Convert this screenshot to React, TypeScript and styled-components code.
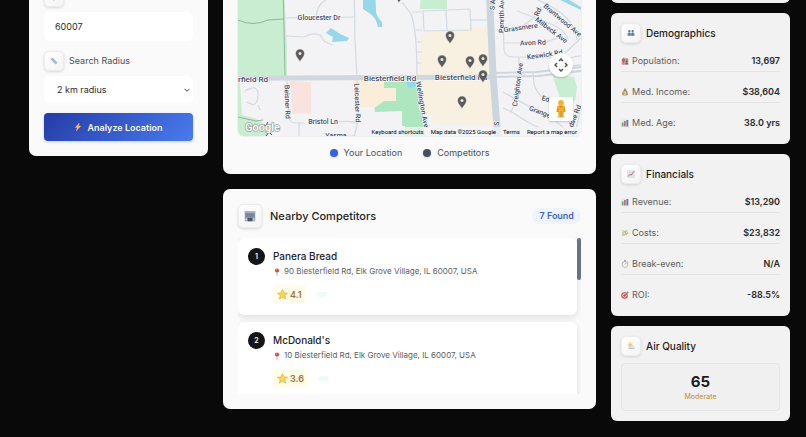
import React from "react";
import styled, { createGlobalStyle, css } from "styled-components";

const GlobalStyle = createGlobalStyle`
  *, *::before, *::after { box-sizing: border-box; }
  html, body { margin: 0; background: #090909; overflow: hidden; }
  body, button, input, select { font-family: Inter, "Liberation Sans", sans-serif; }
  h2, h3, p, dl, dd, dt, ol { margin: 0; padding: 0; }
`;

/* ---------- layout ---------- */

const Page = styled.main`
  display: grid;
  grid-template-columns: minmax(0, 179fr) minmax(0, 373fr) minmax(0, 179fr);
  gap: 15px;
  align-items: start;
  margin-top: -28px;
  padding: 0 16px 16px 29px;
  color: #1d1d1f;
`;

const Column = styled.div<{ $gap: number }>`
  display: flex;
  flex-direction: column;
  gap: ${(p) => p.$gap}px;
`;

const Card = styled.section`
  background: #fafafa;
  border-radius: 7px;
  padding: 15px;
`;

const StatCard = styled.section`
  background: #f2f2f2;
  border-radius: 6px;
  padding: 10px;
`;

const IconTile = styled.span<{ $size: number }>`
  display: inline-flex;
  align-items: center;
  justify-content: center;
  flex: none;
  width: ${(p) => p.$size}px;
  height: ${(p) => p.$size}px;
  border-radius: 5px;
  background: linear-gradient(145deg, #ffffff, #f4f4f5);
  border: 1px solid #ececee;
  box-shadow: 0 1px 3px rgba(0, 0, 0, 0.14);
`;

/* ---------- search form ---------- */

const Form = styled.form`
  display: flex;
  flex-direction: column;
  gap: 10px;
`;

const Field = styled.div`
  display: flex;
  flex-direction: column;
  gap: 5px;
`;

const FieldLabel = styled.label`
  display: flex;
  align-items: center;
  gap: 5px;
  font-size: 9px;
  line-height: 20px;
  color: #505054;
`;

const control = css`
  width: 100%;
  border: 0;
  border-radius: 5px;
  background: #ffffff;
  color: #2c2c2e;
  font-size: 9px;
`;

const TextInput = styled.input`
  ${control}
  height: 29px;
  padding: 0 11px;
`;

const SelectWrap = styled.div`
  display: grid;
  align-items: center;
  & > * { grid-area: 1 / 1; }
  & > svg { justify-self: end; margin-right: 2px; pointer-events: none; }
`;

const Select = styled.select`
  ${control}
  appearance: none;
  height: 27px;
  padding: 0 13px;
`;

const PrimaryButton = styled.button`
  display: flex;
  align-items: center;
  justify-content: center;
  gap: 5px;
  height: 28px;
  border: 0;
  border-radius: 4px;
  background: linear-gradient(135deg, #243ca6, #4a7bee);
  box-shadow: 0 1px 3px rgba(37, 99, 235, 0.3);
  color: #f4f7ff;
  font-size: 9px;
  font-weight: 600;
`;

/* ---------- map ---------- */

const MapFrame = styled.div`
  position: relative;
  height: 149px;
  border-radius: 6px;
  overflow: hidden;
  box-shadow: 0 0 0 1px #eeeff0;
`;

const MapSvg = styled.svg`
  display: block;
  width: 100%;
  height: 100%;
`;

const MapCredits = styled.div`
  position: absolute;
  right: 0;
  bottom: 0;
  display: flex;
  background: rgba(245, 245, 245, 0.7);
  padding: 0 4px;
  gap: 7px;
  line-height: 9px;
`;

const creditText = css`
  font-family: Roboto, "Liberation Sans", sans-serif;
  font-size: 6px;
  line-height: 9px;
  color: #000000;
  white-space: nowrap;
`;

const CreditButton = styled.button`
  ${creditText}
  border: 0;
  padding: 0;
  background: none;
`;

const CreditNote = styled.span`
  ${creditText}
`;

const CreditLink = styled.a`
  ${creditText}
  text-decoration: none;
`;

const MapControls = styled.div`
  position: absolute;
  right: 8px;
  bottom: 15px;
  display: flex;
  flex-direction: column;
  gap: 20px;
`;

const MapControl = styled.button<{ $round?: boolean }>`
  display: flex;
  align-items: center;
  justify-content: center;
  width: 24px;
  height: 24px;
  padding: 0;
  border: 0;
  border-radius: ${(p) => (p.$round ? "50%" : "1px")};
  background: #ffffff;
  box-shadow: 0 1px 2px rgba(0, 0, 0, 0.2);
`;

const Legend = styled.div`
  display: flex;
  justify-content: center;
  gap: 21px;
  padding-top: 10px;
`;

const LegendItem = styled.span`
  display: flex;
  align-items: center;
  gap: 6px;
  font-size: 9px;
  line-height: 13px;
  color: #475063;
`;

const Dot = styled.i<{ $color: string }>`
  width: 8px;
  height: 8px;
  border-radius: 50%;
  background: ${(p) => p.$color};
  box-shadow: 0 1px 2px rgba(0, 0, 0, 0.15);
`;

/* ---------- competitors ---------- */

const ListHeader = styled.header`
  display: flex;
  align-items: center;
  gap: 8px;
  margin-bottom: 10px;
`;

const ListTitle = styled.h2`
  flex: 1;
  font-size: 11px;
  line-height: 24px;
  font-weight: 500;
`;

const CountPill = styled.span`
  padding: 0 7px;
  border-radius: 8px;
  background: #eef4fe;
  color: #4463cf;
  font-size: 9px;
  line-height: 16px;
  font-weight: 600;
`;

const ScrollArea = styled.div`
  display: flex;
  height: 156px;
  overflow: hidden;
`;

const CompetitorList = styled.ol`
  flex: 1;
  display: flex;
  flex-direction: column;
  gap: 7px;
  list-style: none;
`;

const ScrollThumb = styled.div`
  width: 4px;
  height: 42px;
  border-radius: 2px;
  background: #64748b;
`;

const CompetitorItem = styled.li`
  display: flex;
  align-items: flex-start;
  flex: none;
  gap: 8px;
  height: 77px;
  padding: 10px;
  border-radius: 6px;
  background: #ffffff;
  box-shadow: 0 2px 6px rgba(0, 0, 0, 0.12);
`;

const Rank = styled.span`
  flex: none;
  width: 17px;
  height: 17px;
  border-radius: 50%;
  background: #151517;
  color: #ffffff;
  font-size: 7px;
  line-height: 17px;
  font-weight: 600;
  text-align: center;
`;

const CompetitorName = styled.h3`
  font-size: 10px;
  line-height: 16px;
  font-weight: 500;
`;

const Address = styled.p`
  display: flex;
  align-items: center;
  gap: 3px;
  font-size: 8px;
  line-height: 15px;
  color: #5e5e62;
`;

const Badges = styled.div`
  display: flex;
  align-items: center;
  gap: 10px;
  margin-top: 6px;
`;

const Rating = styled.span`
  display: flex;
  align-items: center;
  gap: 2px;
  padding: 0 4px;
  border-radius: 4px;
  background: #fffce9;
  color: #a0703c;
  font-size: 9px;
  line-height: 19px;
  font-weight: 600;
`;

const PriceHint = styled.i`
  width: 11px;
  height: 5px;
  border-radius: 3px;
  background: #f0fbf7;
`;

/* ---------- stats ---------- */

const StatHeader = styled.header`
  display: flex;
  align-items: center;
  gap: 5px;
  margin-bottom: 7px;
`;

const StatTitle = styled.h2`
  font-size: 10px;
  line-height: 20px;
  font-weight: 500;
`;

const StatList = styled.dl`
  display: flex;
  flex-direction: column;
  gap: 9px;
`;

const StatRow = styled.div`
  display: flex;
  justify-content: space-between;
  height: 22px;
  border-bottom: 1px solid #e3e3e4;
  font-size: 9px;
  line-height: 22px;
  &:last-child { border-bottom-color: transparent; }
`;

const StatName = styled.dt`
  display: flex;
  align-items: center;
  gap: 3px;
  color: #5c5c60;
`;

const StatValue = styled.dd`
  color: #2a2a2c;
  font-weight: 600;
`;

const AirBox = styled.div`
  display: flex;
  flex-direction: column;
  align-items: center;
  padding: 8px;
  border: 1px solid #e5e5e6;
  border-radius: 4px;
  background: #f0f0f0;
`;

const AirValue = styled.strong`
  font-size: 15px;
  line-height: 19px;
  font-weight: 700;
`;

const AirLabel = styled.span`
  font-size: 7px;
  line-height: 11px;
  font-weight: 500;
  color: #c99b4c;
`;

/* ---------- pictograms, all on a 16-unit grid ---------- */

const glyphs: Record<string, React.ReactNode> = {
  pin: (
    <>
      <path d="M8 8v7.500" stroke="#9aa0a6" strokeWidth="1.600" />
      <circle cx="8" cy="5" r="4.200" fill="#d8494f" />
      <circle cx="6.800" cy="3.700" r="1.200" fill="#f3a3a3" />
    </>
  ),
  ruler: (
    <>
      <path d="M1 4.500 4.500 1 15 11.500 11.500 15z" fill="#a9bbd3" />
      <path d="m6 3-1.500 1.500M8 5 6.500 6.500M10 7 8.500 8.500M12 9l-1.500 1.500" stroke="#6f84a3" strokeWidth="0.800" />
    </>
  ),
  bolt: <path d="M10.500 0 2.500 9h4.200L4.500 16l9-9.800H9z" fill="#f7b267" stroke="#ffdf8a" strokeWidth="0.600" />,
  store: (
    <>
      <path d="M1 1.500h14V15H1z" fill="#8b98a6" />
      <path d="M1 1.500h14v2.500H1z" fill="#aab4bf" />
      <path d="M2.500 5.500h11M2.500 8h11" stroke="#6a7b8e" strokeWidth="1.300" />
      <path d="M5 10.500h6V15H5z" fill="#46566a" />
      <path d="M2 11h2v3H2zM12 11h2v3h-2z" fill="#c6d3df" />
    </>
  ),
  people: (
    <>
      <circle cx="4.700" cy="4.500" r="2.300" fill="#5b7196" />
      <circle cx="11.300" cy="4.500" r="2.300" fill="#5b7196" />
      <path d="M1 13.500V9.500q0-2.300 3.500-2.300T8 9.500q0-2.300 3.500-2.300T15 9.500v4z" fill="#6f8fc2" />
      <path d="M4.700 8v5.500M11.300 8v5.500" stroke="#405880" />
    </>
  ),
  crowd: (
    <>
      <path d="M1 5 5 1l5 1 5 2v11H1z" fill="#cdb9b0" />
      <path d="M2 5 5 2l3 3v3H2z" fill="#c65c56" />
      <path d="M9 3h5v4H9z" fill="#8d98a7" />
      <circle cx="5" cy="9.500" r="2" fill="#91605a" />
      <circle cx="11" cy="9" r="2.200" fill="#5e5560" />
      <path d="M2 15q0-3.500 3-3.500T8 15z" fill="#d77b75" />
      <path d="M8 15q0-4 3-4t4 4z" fill="#606e83" />
    </>
  ),
  bag: (
    <>
      <path d="M6 1h4.500L9.800 4q4.700 3.500 4.200 8 0 3-6 3T2 12q0-4.500 4.500-8z" fill="#b49a62" />
      <path d="M5.700 4.500h5" stroke="#74603a" strokeWidth="1.200" />
      <path d="M10 8H7.200q-1.200 1.200.4 1.900l1.500.6q1.400 1.300-.5 2H6M8 7v7" fill="none" stroke="#fff1c6" strokeWidth="1" />
    </>
  ),
  bars: (
    <>
      <path d="M.5 1h15v14H.5z" fill="#e4e8ee" />
      <path d="M1.500 7h3.500v8H1.500z" fill="#5bad71" />
      <path d="M6 4h3.500v11H6z" fill="#d9646c" />
      <path d="M10.800 2h3.700v13h-3.700z" fill="#4c80c4" />
    </>
  ),
  chart: (
    <>
      <path d="M1 1h14v14H1z" fill="#e5e9ee" stroke="#bdc6d0" strokeWidth=".6" />
      <path d="M5.500 1v14M10.500 1v14M1 5.500h14M1 10.500h14" stroke="#c3ccd5" strokeWidth=".6" />
      <path d="m2 13 3.500-4 3 1L14 2.500" fill="none" stroke="#cb4f64" strokeWidth="1.700" />
    </>
  ),
  money: (
    <>
      <path d="M2 6 12 2l3 7-10 5z" fill="#b7bd94" />
      <path d="m4 7 7-3 2 4-7 3z" fill="#e2dfb2" />
      <path d="m7 4 4 7" stroke="#cda65e" strokeWidth="2" />
      <path d="M1 2q3-1 5 2L3 5zM1 11q2-2 5 0l-2 4z" fill="#c9cdbf" />
    </>
  ),
  watch: (
    <>
      <circle cx="8" cy="9" r="5.800" fill="#f7f7f7" stroke="#99999d" strokeWidth="1.300" />
      <path d="M6 1h4M8 1v2.500M12.500 3l1.500 1.500M8 9l2.500-3" stroke="#88888c" strokeWidth="1.400" />
    </>
  ),
  target: (
    <>
      <circle cx="7" cy="9" r="6.500" fill="#cd4b50" />
      <circle cx="7" cy="9" r="4.300" fill="#f5dddd" />
      <circle cx="7" cy="9" r="2.500" fill="#cd4b50" />
      <path d="m7 9 6-6" stroke="#566878" strokeWidth="1.200" />
      <path d="m11 5 .3-3L14 0v2.500l2 .5-2 2z" fill="#61a58e" />
    </>
  ),
  weather: (
    <>
      <path d="M7 0v2M1 6h2M2.500 1.500l1.500 1.600M12 1.500 10.500 3" stroke="#f0ba45" strokeWidth="1.300" />
      <circle cx="7" cy="6.500" r="4" fill="#f5c95a" />
      <path d="M5 14q-3-.5-2.500-3T6 9q1-3 4-2.500T13.500 9q2 .5 2 2.500T13 14z" fill="#dce1e5" />
      <path d="M5 14h8q2.500-.5 2.500-2.500-5 1.500-13 0Q2.500 13.500 5 14z" fill="#c0c8d0" />
    </>
  ),
  star: (
    <path
      d="m8 .8 2.200 4.800 5.200.5-4 3.500 1.200 5.200L8 12.100l-4.600 2.700 1.200-5.200-4-3.500 5.200-.5z"
      fill="#f8d654"
      stroke="#d4a83f"
      strokeWidth=".8"
      strokeLinejoin="round"
    />
  ),
};

const Glyph = ({ name, size }: { name: string; size: number }) => (
  <svg width={size} height={size} viewBox="0 0 16 16" aria-hidden="true">
    {glyphs[name]}
  </svg>
);

/* ---------- map drawing ---------- */

const pins = [
  [300, 62],
  [450, 44],
  [442, 68],
  [470, 69],
  [483, 67],
  [483, 83],
  [462, 109],
  [399, 3],
];

const roads = [
  "M284 18 354 17",
  "M316 18q1-14 10-18",
  "M286 36l18 1q8-5 16-2l4 6 8 4",
  "M354-20 355 40 357 78 358 122 354 137",
  "M402 2 411 14q6 15 6 62",
  "M412 12h10M416 30h6M417 42h5M417 52h5M417 63h5",
  "M423 11 470 9 471 30 424 31zM446 10l1 20",
  "M471 20h18",
  "M287 80 289 118q1 5 8 5h7",
  "M338 122q14-2 20 2M299 123v14M326 136h30",
  "M502-10 504 50q1 7 10 7l46 1 21-20",
  "M504 43h30q16 0 28-8",
  "M517 11l34 13q14 6 17 15",
  "M504 29q24 1 37-22",
  "M533-2q42 16 44 42",
  "M519 58 518 98 511 112",
  "M533 73 534 84q3 12 18 20",
  "M503 92q25 14 44 24 16 8 22 20",
  "M503 108l9 4q20 14 42 22",
  "M552 72q14-16 29-16M556 74q18-10 25-9",
  "M573 137q6-16 8-31",
  "M245 91q14-8 13 5t-11 6M258 105l2 5",
];

const labels: [string, number, number, number][] = [
  ["Gloucester Dr", 319, 20, 0],
  ["rfield Rd", 253, 82, 0],
  ["Biesterfield Rd", 390, 81, 0],
  ["Biesterfield Rd", 461, 80, 0],
  ["Bristol Ln", 323, 124, 0],
  ["Yasma", 336, 138, 0],
  ["Beisner Rd", 285, 102, 88],
  ["Leicester Rd", 355, 103, 88],
  ["Wellington Ave", 420, 105, 80],
  ["Penrith Ave", 504, 15, -89],
  ["S A", 495, 5, -85],
  ["S", 499, 124, -85],
  ["Avon Rd", 533, 45, -2],
  ["Keswick Rd", 545, 57, -8],
  ["Grassmere", 521, 30, -8],
  ["Rd", 540, 13, -65],
  ["Milbeck Ave", 550, 32, 37],
  ["Brantwood Ave", 561, 22, 40],
  ["Creighton Ave", 520, 85, -82],
  ["Grange", 539, 114, 21],
  ["Ed", 545, 101, 15],
  ["dale Rd", 577, 117, -68],
];

const MapDrawing = () => (
  <MapSvg viewBox="238 -13 343 149" preserveAspectRatio="xMidYMax slice" role="img" aria-label="Street map">
    <rect x="100" y="-60" width="700" height="220" fill="#f3f2f4" />
    <g fill="#c8edd1">
      <path d="M200-30h83l4 77v30l-87 2z" />
      <path d="M200 83h40l2 32 17 5 8 7 1 12h-68z" />
      <path d="M421-15h26v24h-27z" />
      <path d="M552 74q12 2 22 3l3 10-2 14h-14z" />
    </g>
    <path d="m384 82 33-1 8 56h-20v-11h-3v-15l-27 1-1-9 10-3h12V89l-12-1z" fill="#aee6bf" />
    <path d="m290 81 21 1v31l-19 1z" fill="#fae3df" />
    <path d="M353 80h31v8h12v13h-12l-8 6h-20z" fill="#fbeed8" />
    <path d="m422 33 67-6 5 48 5 50-67-1 1-8-14-6-1-30z" fill="#f8f0e0" />
    <g fill="#97d7ea">
      <path d="m326 33 5-5 9 6 9 4-2 3-15 1 1-5z" />
      <path d="M363-20h12l1 32q1 5 6 10v5h-4q-2-10-9-14l-6-4z" />
      <path d="M406 82h11l-2 5-7 1z" />
      <path d="m556-2 25 12v-3L564-3z" />
    </g>
    <g fill="none" stroke="#d3dae1" strokeWidth="1.200">
      {roads.map((d) => (
        <path key={d} d={d} />
      ))}
    </g>
    <path d="M238 20q15 7 30 0l16-1M283-20l2 97M238 117l18 4 7-1" fill="none" stroke="#7a9d88" strokeWidth=".7" />
    <path d="m200 79 85-1 208-1" fill="none" stroke="#d0d7dd" strokeWidth="5" />
    <path d="m493 77 45-1 43-5h60M494 73l42-1 45-5" fill="none" stroke="#cdd6dd" strokeWidth="1.800" />
    <path d="m489-20 2 50 2 45 5 65" fill="none" stroke="#cbd5dd" strokeWidth="7" />
    <g
      fill="#3d4a68"
      stroke="#ffffff"
      strokeWidth="1.200"
      strokeLinejoin="round"
      paintOrder="stroke"
      fontFamily="Roboto, sans-serif"
      fontWeight="500"
      textAnchor="middle"
    >
      {labels.map(([text, x, y, angle]) => (
        <text key={`${text}-${x}`} x={x} y={y} fontSize={text.startsWith("Biest") || text === "rfield Rd" ? 8 : 7} transform={`rotate(${angle} ${x} ${y})`}>
          {text}
        </text>
      ))}
    </g>
    {pins.map(([x, y]) => (
      <g key={`${x}-${y}`} transform={`translate(${x} ${y})`}>
        <path d="M0 0c-1-3-4.500-5-4.500-8.500a4.500 4.500 0 0 1 9 0C4.500-5 1-3 0 0z" fill="#5a5a5a" stroke="#ffffff" strokeWidth=".5" />
        <circle cy="-8.500" r="1.500" fill="#ece8df" />
      </g>
    ))}
    <path d="m264 125 6 2M268 122l-3 5M267 130l5 5M271 130l-5 6" stroke="#454c60" strokeWidth="1" />
    <text
      x="245"
      y="131"
      fontSize="11"
      fontFamily="Roboto, sans-serif"
      fontWeight="500"
      fill="#ffffff"
      stroke="#9ba09f"
      strokeWidth="1.400"
      paintOrder="stroke"
    >
      Google
    </text>
  </MapSvg>
);

/* ---------- data ---------- */

const competitors = [
  { name: "Panera Bread", address: "90 Biesterfield Rd, Elk Grove Village, IL 60007, USA", rating: "4.1" },
  { name: "McDonald's", address: "10 Biesterfield Rd, Elk Grove Village, IL 60007, USA", rating: "3.6" },
];

const demographics = [
  { icon: "crowd", name: "Population:", value: "13,697" },
  { icon: "bag", name: "Med. Income:", value: "$38,604" },
  { icon: "bars", name: "Med. Age:", value: "38.0 yrs" },
];

const financials = [
  { icon: "bars", name: "Revenue:", value: "$13,290" },
  { icon: "money", name: "Costs:", value: "$23,832" },
  { icon: "watch", name: "Break-even:", value: "N/A" },
  { icon: "target", name: "ROI:", value: "-88.5%" },
];

const Stats = ({ rows }: { rows: typeof financials }) => (
  <StatList>
    {rows.map((row) => (
      <StatRow key={row.name}>
        <StatName>
          <Glyph name={row.icon} size={8} />
          {row.name}
        </StatName>
        <StatValue>{row.value}</StatValue>
      </StatRow>
    ))}
  </StatList>
);

const StatHeading = ({ icon, title }: { icon: string; title: string }) => (
  <StatHeader>
    <IconTile $size={20}>
      <Glyph name={icon} size={8} />
    </IconTile>
    <StatTitle>{title}</StatTitle>
  </StatHeader>
);

const UpperStatCard = styled(StatCard)`
  height: 31px;
`;

export default function App() {
  return (
    <>
      <GlobalStyle />
      <Page>
        <Card>
          <Form onSubmit={(e) => e.preventDefault()}>
            <Field>
              <FieldLabel htmlFor="location">
                <IconTile $size={20}>
                  <Glyph name="pin" size={8} />
                </IconTile>
                Location
              </FieldLabel>
              <TextInput id="location" defaultValue="60007" />
            </Field>
            <Field>
              <FieldLabel htmlFor="radius">
                <IconTile $size={20}>
                  <Glyph name="ruler" size={8} />
                </IconTile>
                Search Radius
              </FieldLabel>
              <SelectWrap>
                <Select id="radius" defaultValue="2">
                  <option value="2">2 km radius</option>
                  <option value="5">5 km radius</option>
                </Select>
                <svg width="8" height="8" viewBox="0 0 8 8" aria-hidden="true">
                  <path d="m1.500 2.800 2.500 2.500 2.500-2.500" fill="none" stroke="#4a4a4d" />
                </svg>
              </SelectWrap>
            </Field>
            <PrimaryButton type="submit">
              <Glyph name="bolt" size={8} />
              Analyze Location
            </PrimaryButton>
          </Form>
        </Card>

        <Column $gap={15}>
          <Card>
            <MapFrame>
              <MapDrawing />
              <MapControls>
                <MapControl $round aria-label="Map camera controls">
                  <svg width="14" height="14" viewBox="0 0 14 14" aria-hidden="true">
                    <path d="m5 3 2-2 2 2M5 11l2 2 2-2M3 5 1 7l2 2M11 5l2 2-2 2" fill="none" stroke="#555555" strokeWidth="1.500" />
                  </svg>
                </MapControl>
                <MapControl aria-label="Street View">
                  <svg width="12" height="20" viewBox="0 0 12 20" aria-hidden="true">
                    <ellipse cx="6" cy="18" rx="4" ry="1.200" fill="#d9d9d9" />
                    <path d="M2 8q0-2 4-2t4 2l.7 5H9l-.7 5H3.700L3 13H1.300z" fill="#efb02d" />
                    <path d="M6 12v6M3 9v4M9 9v4" stroke="#c98320" strokeWidth=".7" />
                    <circle cx="6" cy="3.800" r="2.900" fill="#f3b32e" />
                    <path d="M3.500 6.500q2.500 2 5 0L6 9z" fill="#d97724" />
                  </svg>
                </MapControl>
              </MapControls>
              <MapCredits>
                <CreditButton type="button">Keyboard shortcuts</CreditButton>
                <CreditNote>Map data ©2025 Google</CreditNote>
                <CreditLink href="#terms">Terms</CreditLink>
                <CreditLink href="#report">Report a map error</CreditLink>
              </MapCredits>
            </MapFrame>
            <Legend>
              <LegendItem>
                <Dot $color="#3560e0" />
                Your Location
              </LegendItem>
              <LegendItem>
                <Dot $color="#475060" />
                Competitors
              </LegendItem>
            </Legend>
          </Card>

          <Card>
            <ListHeader>
              <IconTile $size={24}>
                <Glyph name="store" size={12} />
              </IconTile>
              <ListTitle>Nearby Competitors</ListTitle>
              <CountPill>7 Found</CountPill>
            </ListHeader>
            <ScrollArea>
              <CompetitorList>
                {competitors.map((c, i) => (
                  <CompetitorItem key={c.name}>
                    <Rank>{i + 1}</Rank>
                    <div>
                      <CompetitorName>{c.name}</CompetitorName>
                      <Address>
                        <Glyph name="pin" size={8} />
                        {c.address}
                      </Address>
                      <Badges>
                        <Rating>
                          <Glyph name="star" size={11} />
                          {c.rating}
                        </Rating>
                        <PriceHint />
                      </Badges>
                    </div>
                  </CompetitorItem>
                ))}
              </CompetitorList>
              <ScrollThumb />
            </ScrollArea>
          </Card>
        </Column>

        <Column $gap={10}>
          <UpperStatCard />
          <StatCard>
            <StatHeading icon="people" title="Demographics" />
            <Stats rows={demographics} />
          </StatCard>
          <StatCard>
            <StatHeading icon="chart" title="Financials" />
            <Stats rows={financials} />
          </StatCard>
          <StatCard>
            <StatHeading icon="weather" title="Air Quality" />
            <AirBox>
              <AirValue>65</AirValue>
              <AirLabel>Moderate</AirLabel>
            </AirBox>
          </StatCard>
        </Column>
      </Page>
    </>
  );
}
